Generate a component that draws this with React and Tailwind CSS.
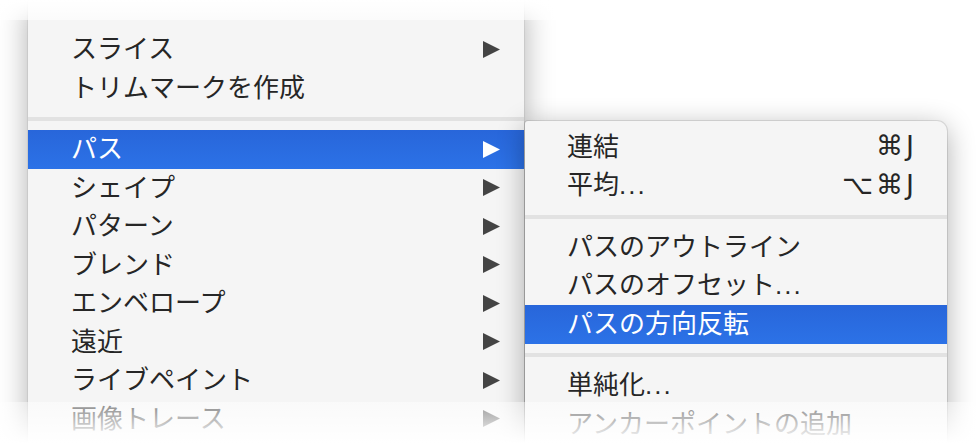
import React from "react";

const FONT = { fontFamily: '"Noto Sans CJK JP", "Noto Sans", sans-serif' };

function Arrow({ color }) {
  return (
    <svg width="17" height="17" viewBox="0 0 17 17" className="shrink-0">
      <polygon points="0,0 17,8.5 0,17" fill={color} />
    </svg>
  );
}

function Dots() {
  return (
    <span className="tracking-[2px]" style={{ fontFamily: '"Liberation Sans", sans-serif' }}>
      ...
    </span>
  );
}

function Row({ label, arrow, active, shortcut, sub }) {
  return (
    <div
      className={
        "flex h-[38.5px] items-center justify-between " +
        (sub ? "pl-[42px] pr-[30px] " : "pl-[43px] pr-[24px] ") +
        (active ? "bg-linear-to-b from-[#2866da] to-[#2c72e7] text-white" : "text-[#262626]")
      }
    >
      <span className="mb-[4px] text-[26px] leading-none whitespace-nowrap">{label}</span>
      {arrow && <Arrow color={active ? "#ffffff" : "#444444"} />}
      {shortcut && (
        <span
          className="mb-[3px] text-[27px] leading-none tracking-[3px] whitespace-nowrap"
          style={{ fontFamily: '"DejaVu Sans", "Noto Sans CJK JP", sans-serif' }}
        >
          {shortcut}
        </span>
      )}
    </div>
  );
}

function Sep() {
  return (
    <div className="flex h-[23px] flex-col justify-center">
      <div className="h-[4px] bg-[#e2e2e2]" />
    </div>
  );
}

export default function App() {
  return (
    <div className="relative h-[443px] w-[976px] overflow-hidden bg-white" style={FONT}>
      <div className="flex items-start">
        <div className="ml-[28px] w-[496px] bg-[#f5f5f5] pb-[30px] pt-[30px] shadow-[0_0_0_1px_rgba(0,0,0,0.06),0_6px_28px_rgba(0,0,0,0.32)]">
          <Row label="スライス" arrow />
          <Row label="トリムマークを作成" />
          <Sep />
          <Row label="パス" arrow active />
          <Row label="シェイプ" arrow />
          <Row label="パターン" arrow />
          <Row label="ブレンド" arrow />
          <Row label="エンベロープ" arrow />
          <Row label="遠近" arrow />
          <Row label="ライブペイント" arrow />
          <Row label="画像トレース" arrow />
        </div>
        <div className="ml-[1px] mt-[121px] w-[422px] rounded-tl-[3px] rounded-tr-[10px] bg-[#f5f5f5] pb-[30px] pt-[7px] shadow-[0_0_0_1px_rgba(0,0,0,0.1),0_6px_28px_rgba(0,0,0,0.32)]">
          <Row sub label="連結" shortcut="⌘J" />
          <Row sub label={<>平均<Dots /></>} shortcut="⌥⌘J" />
          <Sep />
          <Row sub label="パスのアウトライン" />
          <Row sub label={<>パスのオフセット<Dots /></>} />
          <Row sub label="パスの方向反転" active />
          <Sep />
          <Row sub label={<>単純化<Dots /></>} />
          <Row sub label="アンカーポイントの追加" />
        </div>
      </div>
      <div className="pointer-events-none absolute inset-x-0 top-0 h-[20px] bg-linear-to-b from-white to-white/60" />
      <div className="pointer-events-none absolute inset-x-0 top-[402px] h-[41px] bg-linear-to-b from-white/45 to-white" />
    </div>
  );
}
